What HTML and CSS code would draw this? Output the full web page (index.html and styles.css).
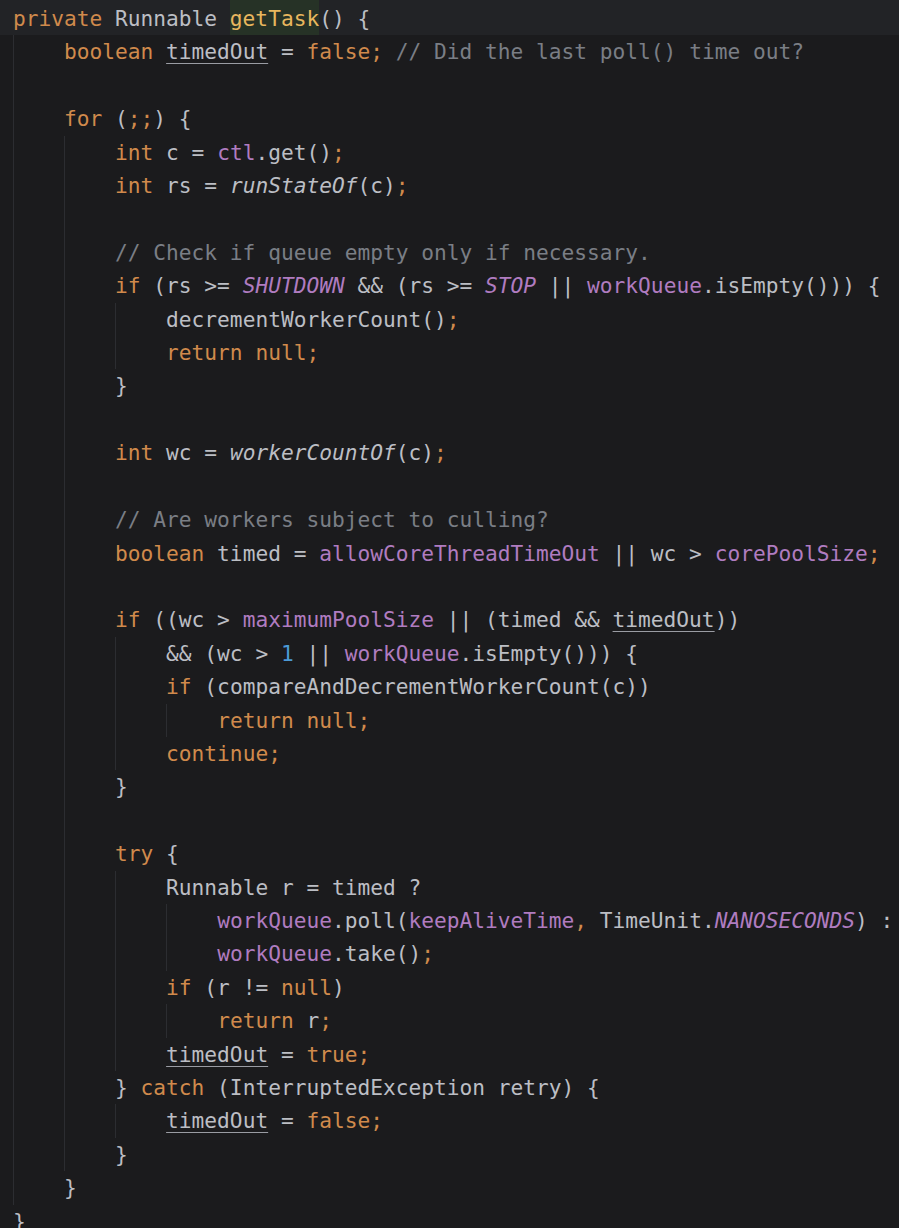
FILE: index.html
```html
<!DOCTYPE html>
<html>
<head>
<meta charset="utf-8">
<link rel="stylesheet" href="styles.css">
</head>
<body>
<div class="editor">
<div class="l cur"><span class="k">private</span> Runnable <span class="fn">getTask</span>() {</div>
<div class="l"><span class="g">    </span><span class="k">boolean</span> <span class="u">timedOut</span> = <span class="k">false;</span> <span class="c">// Did the last poll() time out?</span></div>
<div class="l"><span class="g">    </span></div>
<div class="l"><span class="g">    </span><span class="k">for</span> (<span class="k">;;</span>) {</div>
<div class="l"><span class="g">    </span><span class="g">    </span><span class="k">int</span> c = <span class="f">ctl</span>.get()<span class="k">;</span></div>
<div class="l"><span class="g">    </span><span class="g">    </span><span class="k">int</span> rs = <span class="si">runStateOf</span>(c)<span class="k">;</span></div>
<div class="l"><span class="g">    </span><span class="g">    </span></div>
<div class="l"><span class="g">    </span><span class="g">    </span><span class="c">// Check if queue empty only if necessary.</span></div>
<div class="l"><span class="g">    </span><span class="g">    </span><span class="k">if</span> (rs &gt;= <span class="fi">SHUTDOWN</span> &amp;&amp; (rs &gt;= <span class="fi">STOP</span> || <span class="f">workQueue</span>.isEmpty())) {</div>
<div class="l"><span class="g">    </span><span class="g">    </span><span class="g">    </span>decrementWorkerCount()<span class="k">;</span></div>
<div class="l"><span class="g">    </span><span class="g">    </span><span class="g">    </span><span class="k">return null;</span></div>
<div class="l"><span class="g">    </span><span class="g">    </span>}</div>
<div class="l"><span class="g">    </span><span class="g">    </span></div>
<div class="l"><span class="g">    </span><span class="g">    </span><span class="k">int</span> wc = <span class="si">workerCountOf</span>(c)<span class="k">;</span></div>
<div class="l"><span class="g">    </span><span class="g">    </span></div>
<div class="l"><span class="g">    </span><span class="g">    </span><span class="c">// Are workers subject to culling?</span></div>
<div class="l"><span class="g">    </span><span class="g">    </span><span class="k">boolean</span> timed = <span class="f">allowCoreThreadTimeOut</span> || wc &gt; <span class="f">corePoolSize</span><span class="k">;</span></div>
<div class="l"><span class="g">    </span><span class="g">    </span></div>
<div class="l"><span class="g">    </span><span class="g">    </span><span class="k">if</span> ((wc &gt; <span class="f">maximumPoolSize</span> || (timed &amp;&amp; <span class="u">timedOut</span>))</div>
<div class="l"><span class="g">    </span><span class="g">    </span><span class="g">    </span>&amp;&amp; (wc &gt; <span class="n">1</span> || <span class="f">workQueue</span>.isEmpty())) {</div>
<div class="l"><span class="g">    </span><span class="g">    </span><span class="g">    </span><span class="k">if</span> (compareAndDecrementWorkerCount(c))</div>
<div class="l"><span class="g">    </span><span class="g">    </span><span class="g">    </span><span class="g">    </span><span class="k">return null;</span></div>
<div class="l"><span class="g">    </span><span class="g">    </span><span class="g">    </span><span class="k">continue;</span></div>
<div class="l"><span class="g">    </span><span class="g">    </span>}</div>
<div class="l"><span class="g">    </span><span class="g">    </span></div>
<div class="l"><span class="g">    </span><span class="g">    </span><span class="k">try</span> {</div>
<div class="l"><span class="g">    </span><span class="g">    </span><span class="g">    </span>Runnable r = timed ?</div>
<div class="l"><span class="g">    </span><span class="g">    </span><span class="g">    </span><span class="g">    </span><span class="f">workQueue</span>.poll(<span class="f">keepAliveTime</span><span class="k">,</span> TimeUnit.<span class="fi">NANOSECONDS</span>) :</div>
<div class="l"><span class="g">    </span><span class="g">    </span><span class="g">    </span><span class="g">    </span><span class="f">workQueue</span>.take()<span class="k">;</span></div>
<div class="l"><span class="g">    </span><span class="g">    </span><span class="g">    </span><span class="k">if</span> (r != <span class="k">null</span>)</div>
<div class="l"><span class="g">    </span><span class="g">    </span><span class="g">    </span><span class="g">    </span><span class="k">return</span> r<span class="k">;</span></div>
<div class="l"><span class="g">    </span><span class="g">    </span><span class="g">    </span><span class="u">timedOut</span> = <span class="k">true;</span></div>
<div class="l"><span class="g">    </span><span class="g">    </span>} <span class="k">catch</span> (InterruptedException retry) {</div>
<div class="l"><span class="g">    </span><span class="g">    </span><span class="g">    </span><span class="u">timedOut</span> = <span class="k">false;</span></div>
<div class="l"><span class="g">    </span><span class="g">    </span>}</div>
<div class="l"><span class="g">    </span>}</div>
<div class="l">}</div>
</div>
</body>
</html>
```

FILE: styles.css
```css
html, body {
  margin: 0;
  padding: 0;
  background: #1b1b1d;
}

.editor {
  width: 899px;
  height: 1228px;
  box-sizing: border-box;
  overflow: hidden;
  background: #1b1b1d;
  color: #bcbec4;
  font-family: "DejaVu Sans Mono", "Liberation Mono", monospace;
  font-size: 21.2px;
  padding-top: 2px;
}

.l {
  white-space: pre;
  height: 33.42px;
  line-height: 33.42px;
  padding-left: 13px;
}

.cur {
  background: #222326;
  box-shadow: 0 -2px 0 #222326;
}

.g {
  display: inline-block;
  height: 33.42px;
  vertical-align: top;
  box-shadow: inset 1px 0 0 #2c2d31;
}

.k { color: #d08a4c; }
.fn {
  color: #e8b75e;
  display: inline-block;
  vertical-align: top;
  background: #263226;
  box-shadow: 0 -2px 0 #263226;
}
.f { color: #b07cc0; }
.fi { color: #b07cc0; font-style: italic; }
.si { font-style: italic; }
.c { color: #7a7e85; }
.n { color: #4c9ad6; }
.u {
  text-decoration: underline;
  text-decoration-color: #9a9ca3;
  text-underline-offset: 4px;
  text-decoration-thickness: 1px;
}
```
